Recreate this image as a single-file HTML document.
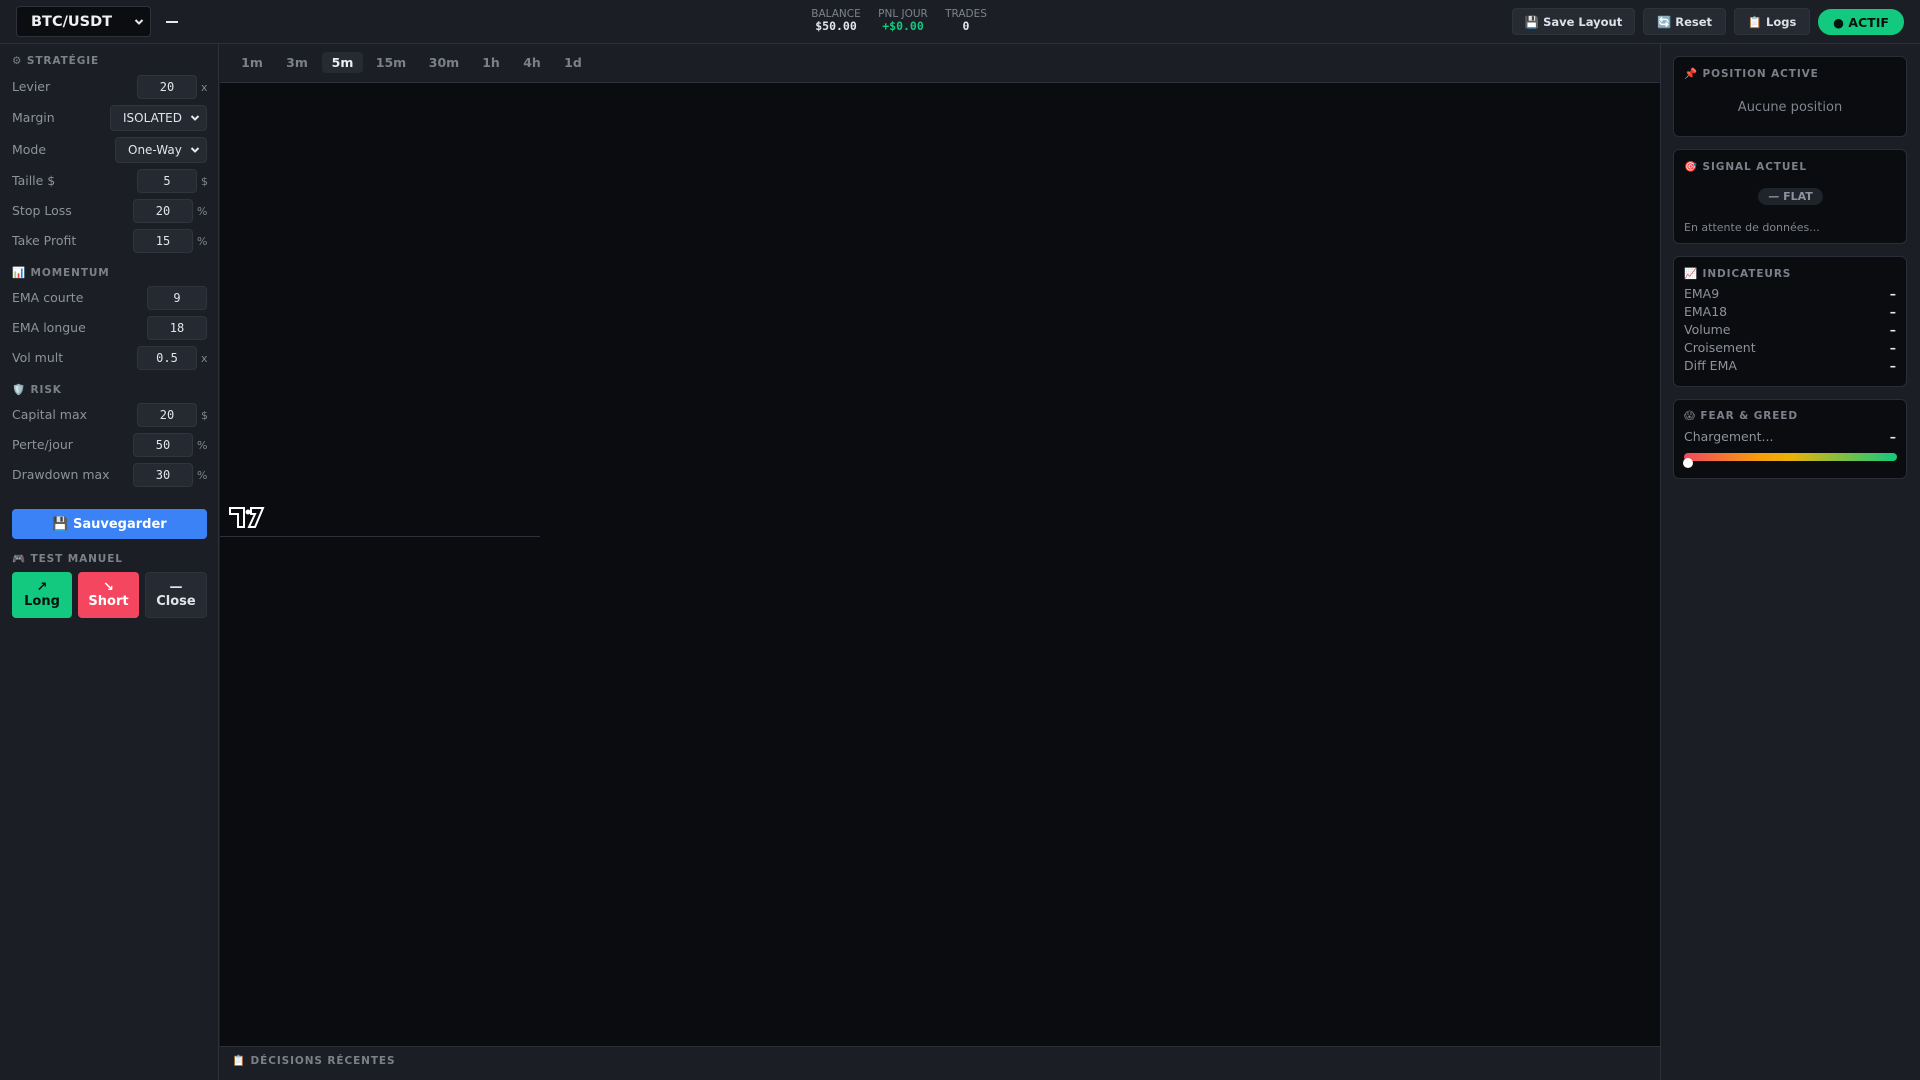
<!DOCTYPE html>
<html><head><meta charset="utf-8"><style>
*{box-sizing:border-box;margin:0;padding:0}
body{width:1920px;height:1080px;background:#1b1e25;font-family:"DejaVu Sans","Liberation Sans",sans-serif;color:#c9ccd3;position:relative;overflow:hidden}
.a{position:absolute}
.hdr{left:0;top:0;width:1920px;height:44px;background:#1b1e25;border-bottom:1px solid #2c3038}
.sel{background:#0b0d10;border:1px solid #2e323a;border-radius:4px}
.btn{background:#262a32;border:1px solid #2e323a;border-radius:4px;color:#dde0e6;font-size:11.5px;font-weight:bold;display:flex;align-items:center;justify-content:center}
.stat{text-align:center;font-size:10.5px;color:#7d828c;line-height:12px}
.stat b{display:block;font-family:"DejaVu Sans Mono",monospace;font-size:11.5px;color:#e4e6ea}
.side{left:0;top:44px;width:219px;height:1036px;border-right:1px solid #2c3038}
.sec{font-size:10.5px;font-weight:bold;letter-spacing:0.9px;color:#7b808a;left:12px}
.lab{left:12px;font-size:12.5px;color:#8d929b}
.inp{background:#252931;border:1px solid #30343c;border-radius:4px;height:24px;font-family:"DejaVu Sans Mono",monospace;font-size:12px;color:#e2e4e8;display:flex;align-items:center;justify-content:center}
.unit{font-size:11px;color:#80858e}
.chart{left:220px;top:83px;width:1440px;height:963px;background:#0a0c0f}
.tabs{left:220px;top:44px;width:1440px;height:39px;border-bottom:1px solid #2c3038}
.tab{top:52px;height:21px;font-size:12.5px;font-weight:bold;color:#7b808a;display:flex;align-items:center;justify-content:center;border-radius:4px}
.right{left:1660px;top:44px;width:260px;height:1036px;border-left:1px solid #2c3038}
.card{left:1673px;width:234px;background:#0a0c0f;border:1px solid #2a2e36;border-radius:6px}
.ct{position:absolute;left:10px;top:10px;font-size:10.5px;font-weight:bold;letter-spacing:0.9px;color:#7b808a}
.row{position:absolute;left:10px;right:10px;font-size:12.5px;color:#8d929b;display:flex;justify-content:space-between}
.row b{color:#e8e8e8}
.tb{text-align:center;font-size:13px;font-weight:bold;line-height:14px;padding-top:9px;border-radius:4px}
.chev{position:absolute;right:6px;top:50%;margin-top:-4px}
</style></head><body>
<div class="a hdr"></div>
<div class="a sel" style="left:16px;top:6px;width:135px;height:31px;color:#eef0f3;font-weight:bold;font-size:14.5px;padding:7px 14px">BTC/USDT<svg class="chev" width="10" height="8" viewBox="0 0 10 8"><path d="M1.5 2L5 5.5 8.5 2" fill="none" stroke="#e6e8eb" stroke-width="2"/></svg></div>
<div class="a" style="left:166px;top:21px;width:12px;height:2px;background:#e6e8eb"></div>
<div class="a stat" style="left:806px;top:8px;width:60px">BALANCE<b>$50.00</b></div>
<div class="a stat" style="left:873px;top:8px;width:60px">PNL JOUR<b style="color:#12c97f">+$0.00</b></div>
<div class="a stat" style="left:936px;top:8px;width:60px">TRADES<b>0</b></div>
<div class="a btn" style="left:1512px;top:8px;width:123px;height:27px">💾 Save Layout</div>
<div class="a btn" style="left:1643px;top:8px;width:83px;height:27px">🔄 Reset</div>
<div class="a btn" style="left:1734px;top:8px;width:76px;height:27px">📋 Logs</div>
<div class="a btn" style="left:1818px;top:9px;width:86px;height:26px;background:#12c97f;border-color:#12c97f;border-radius:13px;color:#06140d;font-size:12.5px">● ACTIF</div>

<div class="a side"></div>
<div class="a sec" style="top:55px">⚙ STRATÉGIE</div>
<div class="a lab" style="top:79px">Levier</div><div class="a inp" style="left:137px;top:75px;width:60px">20</div><div class="a unit" style="left:201px;top:81px">x</div>
<div class="a lab" style="top:110px">Margin</div><div class="a inp" style="left:110px;top:105px;width:97px;height:26px;font-family:'DejaVu Sans';justify-content:flex-start;padding-left:12px">ISOLATED<svg class="chev" width="10" height="8" viewBox="0 0 10 8"><path d="M1.5 2L5 5.5 8.5 2" fill="none" stroke="#e6e8eb" stroke-width="2"/></svg></div>
<div class="a lab" style="top:142px">Mode</div><div class="a inp" style="left:115px;top:137px;width:92px;height:26px;font-family:'DejaVu Sans';justify-content:flex-start;padding-left:12px">One-Way<svg class="chev" width="10" height="8" viewBox="0 0 10 8"><path d="M1.5 2L5 5.5 8.5 2" fill="none" stroke="#e6e8eb" stroke-width="2"/></svg></div>
<div class="a lab" style="top:173px">Taille $</div><div class="a inp" style="left:137px;top:169px;width:60px">5</div><div class="a unit" style="left:201px;top:175px">$</div>
<div class="a lab" style="top:203px">Stop Loss</div><div class="a inp" style="left:133px;top:199px;width:60px">20</div><div class="a unit" style="left:197px;top:205px">%</div>
<div class="a lab" style="top:233px">Take Profit</div><div class="a inp" style="left:133px;top:229px;width:60px">15</div><div class="a unit" style="left:197px;top:235px">%</div>
<div class="a sec" style="top:266px">📊 MOMENTUM</div>
<div class="a lab" style="top:290px">EMA courte</div><div class="a inp" style="left:147px;top:286px;width:60px">9</div>
<div class="a lab" style="top:320px">EMA longue</div><div class="a inp" style="left:147px;top:316px;width:60px">18</div>
<div class="a lab" style="top:350px">Vol mult</div><div class="a inp" style="left:137px;top:346px;width:60px">0.5</div><div class="a unit" style="left:201px;top:352px">x</div>
<div class="a sec" style="top:383px">🛡️ RISK</div>
<div class="a lab" style="top:407px">Capital max</div><div class="a inp" style="left:137px;top:403px;width:60px">20</div><div class="a unit" style="left:201px;top:409px">$</div>
<div class="a lab" style="top:437px">Perte/jour</div><div class="a inp" style="left:133px;top:433px;width:60px">50</div><div class="a unit" style="left:197px;top:439px">%</div>
<div class="a lab" style="top:467px">Drawdown max</div><div class="a inp" style="left:133px;top:463px;width:60px">30</div><div class="a unit" style="left:197px;top:469px">%</div>
<div class="a btn" style="left:12px;top:509px;width:195px;height:30px;background:#3b82f6;border-color:#3b82f6;color:#fff;font-size:13px">💾 Sauvegarder</div>
<div class="a sec" style="top:552px">🎮 TEST MANUEL</div>
<div class="a tb" style="left:12px;top:572px;width:60px;height:46px;background:#12c97f;color:#06140d">↗<br>Long</div>
<div class="a tb" style="left:78px;top:572px;width:61px;height:46px;background:#f4475f;color:#fff">↘<br>Short</div>
<div class="a tb" style="left:145px;top:572px;width:62px;height:46px;background:#262a32;border:1px solid #2e323a;color:#e2e4e8;padding-top:8px">—<br>Close</div>

<div class="a tabs"></div>
<div class="a tab" style="left:238px;width:28px">1m</div>
<div class="a tab" style="left:283px;width:28px">3m</div>
<div class="a tab" style="left:322px;width:41px;background:#262a32;color:#eceef1">5m</div>
<div class="a tab" style="left:374px;width:34px">15m</div>
<div class="a tab" style="left:427px;width:34px">30m</div>
<div class="a tab" style="left:477px;width:28px">1h</div>
<div class="a tab" style="left:518px;width:28px">4h</div>
<div class="a tab" style="left:559px;width:28px">1d</div>
<div class="a chart"></div>
<svg class="a" style="left:229px;top:507px" width="36" height="22" viewBox="0 0 36 22"><path d="M1 1H15V20H9V7H1Z M22 1H34L26 20H20L26 7H22Z" fill="#0a0c0f" stroke="#fff" stroke-width="2"/><circle cx="19" cy="5" r="2.5" fill="#fff"/></svg>
<div class="a" style="left:220px;top:536px;width:320px;height:1px;background:#2c3038"></div>
<div class="a" style="left:220px;top:1046px;width:1440px;height:1px;background:#2c3038"></div>
<div class="a sec" style="left:232px;top:1054px">📋 DÉCISIONS RÉCENTES</div>

<div class="a right"></div>
<div class="a card" style="top:56px;height:81px"><div class="ct">📌 POSITION ACTIVE</div><div class="a" style="left:0;right:0;top:43px;text-align:center;font-size:13px;color:#80858e">Aucune position</div></div>
<div class="a card" style="top:149px;height:95px"><div class="ct">🎯 SIGNAL ACTUEL</div><div class="a" style="left:84px;top:38px;width:65px;height:17px;border-radius:9px;background:#1f232a;color:#8d929b;font-size:11px;font-weight:bold;text-align:center;line-height:17px">— FLAT</div><div class="a" style="left:10px;top:71px;font-size:11px;color:#80858e">En attente de données...</div></div>
<div class="a card" style="top:256px;height:131px"><div class="ct">📈 INDICATEURS</div>
<div class="row" style="top:29px">EMA9<b>–</b></div><div class="row" style="top:47px">EMA18<b>–</b></div><div class="row" style="top:65px">Volume<b>–</b></div><div class="row" style="top:83px">Croisement<b>–</b></div><div class="row" style="top:101px">Diff EMA<b>–</b></div></div>
<div class="a card" style="top:399px;height:80px"><div class="ct">😱 FEAR &amp; GREED</div><div class="row" style="top:29px">Chargement...<b>–</b></div>
<div class="a" style="left:10px;top:53px;width:213px;height:8px;border-radius:4px;background:linear-gradient(90deg,#f4475f,#f59e0b 35%,#eab308 50%,#12c97f)"></div>
<div class="a" style="left:9px;top:58px;width:10px;height:10px;border-radius:50%;background:#fff"></div></div>
</body></html>
